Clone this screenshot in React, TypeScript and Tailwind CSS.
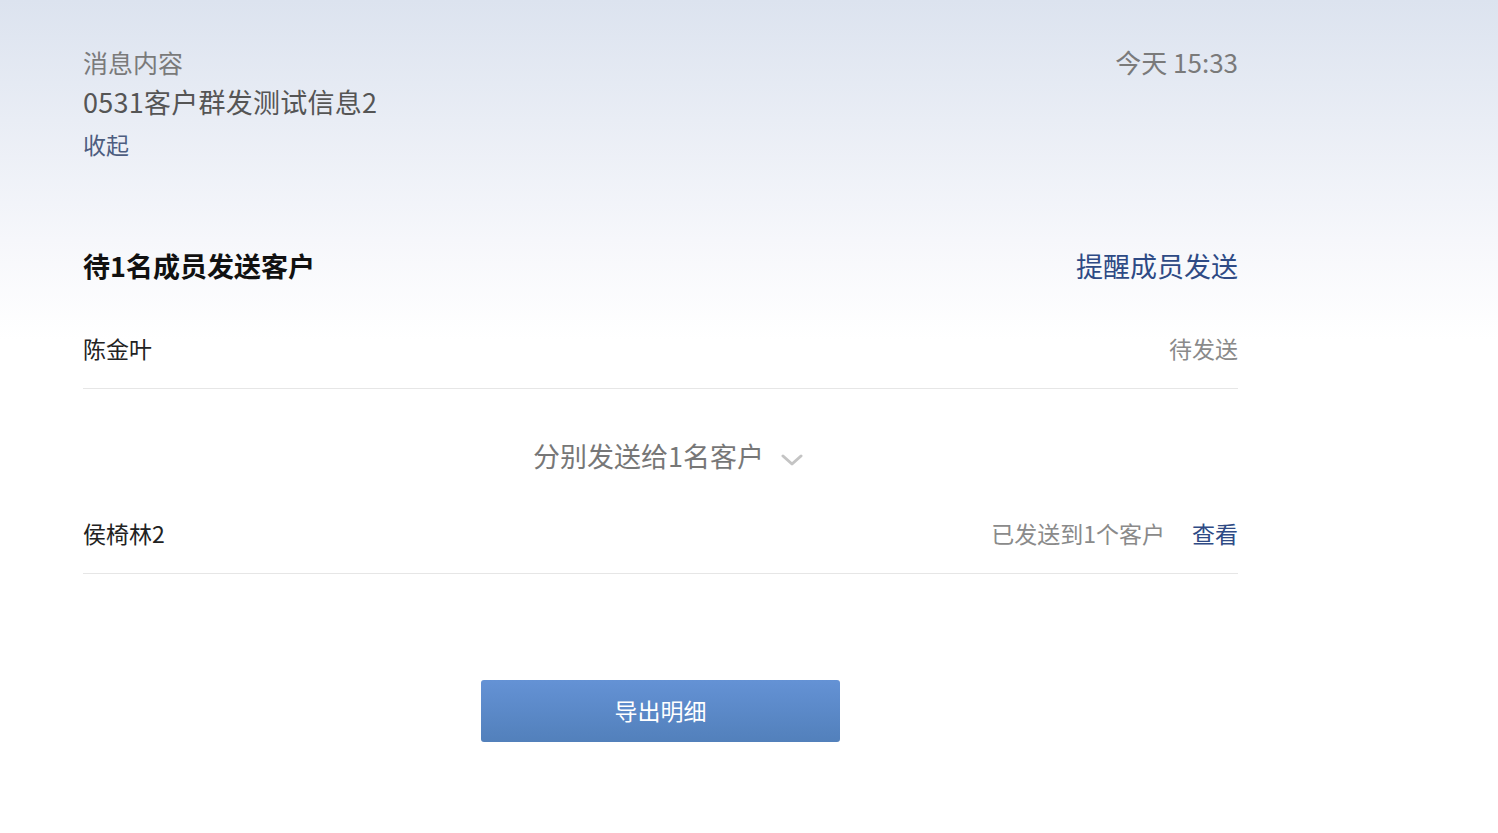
import React from 'react';

const font = { fontFamily: '"Noto Sans CJK SC", "Noto Sans", sans-serif' };

function ChevronDown() {
  return (
    <svg width="22" height="14" viewBox="0 0 22 14" fill="none" className="mt-[8px]">
      <path d="M2 3 L11 11 L20 3" stroke="#c4c4c4" strokeWidth="3" strokeLinecap="round" strokeLinejoin="round" />
    </svg>
  );
}

export default function App() {
  return (
    <div
      className="min-h-screen w-full bg-[linear-gradient(180deg,#dce3ef_0px,#e9edf5_120px,#f6f7fb_240px,#ffffff_340px)]"
      style={font}
    >
      <div className="w-[1155px] ml-[83px] pt-[45px]">
        {/* message header */}
        <div className="flex justify-between items-start">
          <div className="flex flex-col">
            <div className="text-[25px] leading-[34px] text-[#7a7a7a]">消息内容</div>
            <div className="mt-[3px] text-[27px] leading-[40px] text-[#555] tracking-[0.25px]">0531客户群发测试信息2</div>
            <div className="mt-[6px] text-[23px] leading-[32px] text-[#4d5d80] cursor-pointer">收起</div>
          </div>
          <div className="text-[26px] leading-[34px] text-[#7a7a7a]">今天 15:33</div>
        </div>

        {/* pending section */}
        <div className="mt-[87px] flex justify-between items-center h-[40px] pb-[2px]">
          <div className="text-[27px] font-bold text-[#111]">待1名成员发送客户</div>
          <div className="text-[27px] text-[#2e4a85] cursor-pointer">提醒成员发送</div>
        </div>

        <div className="mt-[24px] h-[78px] pb-[3px] flex justify-between items-center border-b border-[#e6e6e6]">
          <div className="text-[23px] text-[#222]">陈金叶</div>
          <div className="text-[23px] text-[#8a8a8a]">待发送</div>
        </div>

        {/* sent section */}
        <div className="pt-[47px] pb-[20px] flex justify-center items-center gap-[17px] pl-[15px]">
          <div className="text-[27px] leading-[40px] text-[#777]">分别发送给1名客户</div>
          <ChevronDown />
        </div>

        <div className="h-[78px] pb-[3px] flex justify-between items-center border-b border-[#e6e6e6]">
          <div className="text-[23px] text-[#222]">侯椅林2</div>
          <div className="flex items-center gap-[27px]">
            <span className="text-[23px] text-[#8a8a8a]">已发送到1个客户</span>
            <span className="text-[23px] text-[#2e4a85] cursor-pointer">查看</span>
          </div>
        </div>

        <button className="mt-[106px] mx-auto flex items-center justify-center w-[359px] h-[62px] pb-[2px] rounded-[3px] bg-[linear-gradient(180deg,#6492d5,#5280bb)] text-white text-[23px]">
          导出明细
        </button>
      </div>
    </div>
  );
}
